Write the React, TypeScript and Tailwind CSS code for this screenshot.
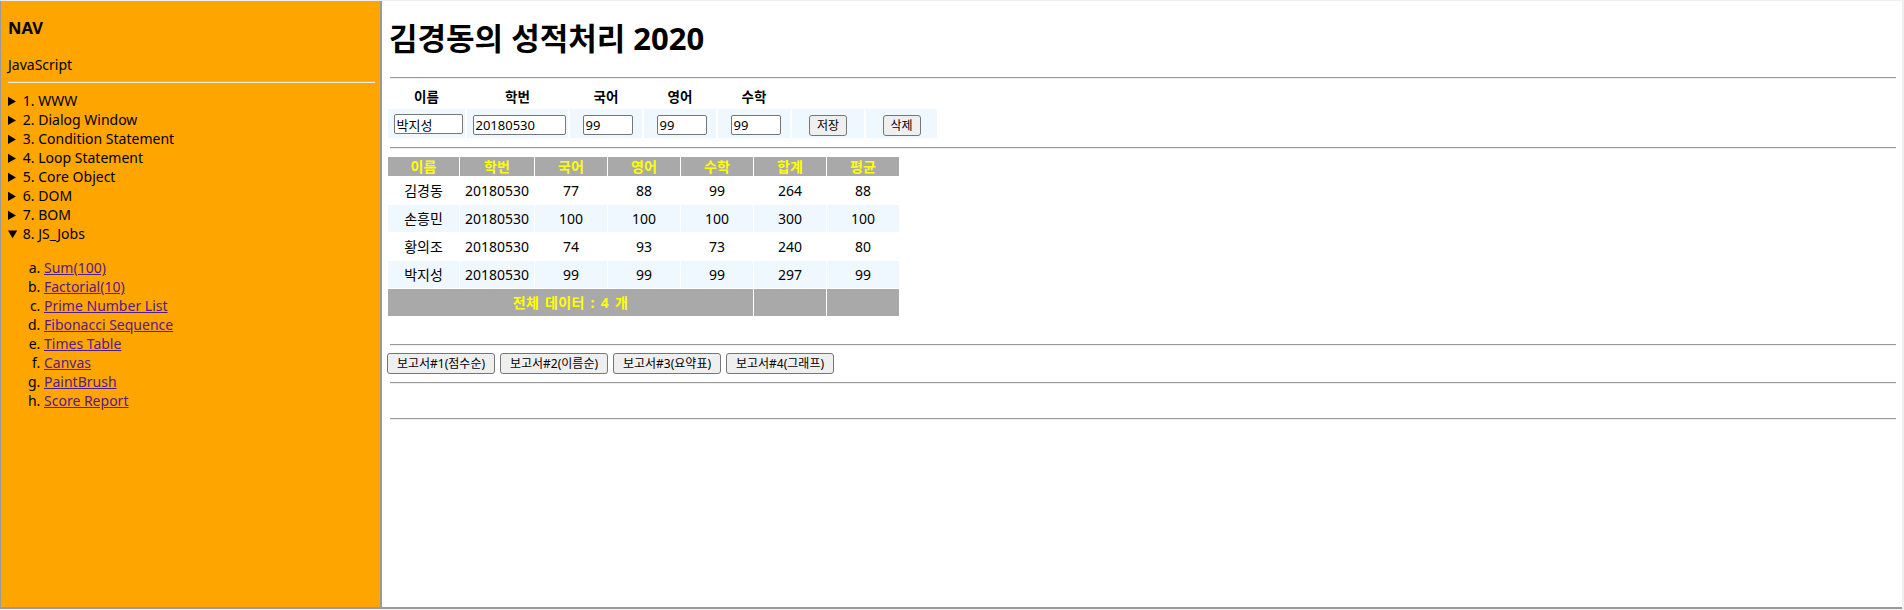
import React from "react";

const rows: (string | number)[][] = [
  ["김경동", "20180530", 77, 88, 99, 264, 88],
  ["손흥민", "20180530", 100, 100, 100, 300, 100],
  ["황의조", "20180530", 74, 93, 73, 240, 80],
  ["박지성", "20180530", 99, 99, 99, 297, 99],
];

const menu = [
  "1. WWW",
  "2. Dialog Window",
  "3. Condition Statement",
  "4. Loop Statement",
  "5. Core Object",
  "6. DOM",
  "7. BOM",
];

const jobs: [string, string][] = [
  ["Sum", "(100)"],
  ["Factorial", "(10)"],
  ["Prime Number List", ""],
  ["Fibonacci Sequence", ""],
  ["Times Table", ""],
  ["Canvas", ""],
  ["PaintBrush", ""],
  ["Score Report", ""],
];

function Hr({ className = "" }: { className?: string }) {
  return <div className={"h-[2px] border-t border-t-[#9a9a9a] border-b border-b-[#eeeeee] ml-[4px] " + className} />;
}

export default function App() {
  const heads = ["이름", "학번", "국어", "영어", "수학", "합계", "평균"];
  const formWidths = ["w-[77px]", "w-[101px]", "w-[72px]", "w-[72px]", "w-[72px]", "w-[72px]", "w-[71px]"];
  const dataWidths = ["w-[71px]", "w-[74px]", "w-[72px]", "w-[72px]", "w-[72px]", "w-[72px]", "w-[72px]"];
  const inputCls =
    "h-[20px] rounded-[2px] border border-[#767676] bg-white px-[2px] text-[13px] leading-[18px] outline-none";
  const btnCls =
    "h-[21px] rounded-[3px] border border-[#767676] bg-[#efefef] text-[12px] leading-[19px] whitespace-nowrap";
  return (
    <div className="h-[610px] w-[1904px] overflow-hidden bg-[#efefef] pt-px pr-[2px] font-['Noto_Sans','Noto_Sans_CJK_KR',sans-serif] text-black">
      <div className="flex h-[608px] border-b-2 border-b-[#9a9a9a]">
        {/* NAV */}
        <nav className="w-[382px] shrink-0 border-l border-l-[#9a9a9a] border-r-2 border-r-[#9a9a9a] bg-[#ffa500] pl-[7px] pr-[5px] pt-[17px]">
          <h3 className="text-[16.5px] leading-[20px] font-bold">NAV</h3>
          <div className="mt-[17px] text-[14px] leading-[19px]">JavaScript</div>
          <div className="mt-[7px] h-[2px] border-t border-t-[#b8b8b8] border-b border-b-[#eaeaea]" />
          <div className="mt-[8px] text-[14px] leading-[19px]">
            {menu.map((m) => (
              <details key={m}>
                <summary className="cursor-pointer">{m}</summary>
              </details>
            ))}
            <details open>
              <summary className="cursor-pointer">8. JS_Jobs</summary>
              <ol className="mt-[15px] list-[lower-alpha] pl-[36px]">
                {jobs.map(([a, b]) => (
                  <li key={a} className="leading-[19px]">
                    <a href="#" className="text-[#551a8b] underline">
                      {a}
                      {b}
                    </a>
                  </li>
                ))}
              </ol>
            </details>
          </div>
        </nav>

        {/* MAIN */}
        <main className="flex-1 bg-white pl-[4px] pr-[6px]">
          <div className="h-[76px] pt-[19px]">
            <h1 className="ml-[3px] text-[31px] leading-[36px] font-bold">김경동의 성적처리 2020</h1>
          </div>
          <Hr />

          <table className="mt-[6px] border-separate border-spacing-[2px]">
            <tbody>
              <tr>
                {heads.slice(0, 5).map((h, i) => (
                  <th key={h} className={"h-[20px] p-0 text-center text-[13.5px] leading-[20px] font-bold " + formWidths[i]}>
                    {h}
                  </th>
                ))}
                <th className={"p-0 " + formWidths[5]} />
                <th className={"p-0 " + formWidths[6]} />
              </tr>
              <tr className="bg-[#f0f8ff]">
                <td className="h-[29px] p-0 pl-[3px] text-center">
                  <input defaultValue="박지성" className={inputCls + " w-[69px]"} />
                </td>
                <td className="p-0 pl-[3px] text-center">
                  <input defaultValue="20180530" className={inputCls + " w-[93px]"} />
                </td>
                {["99", "99", "99"].map((v, i) => (
                  <td key={i} className="p-0 pl-[3px] text-center">
                    <input defaultValue={v} className={inputCls + " w-[50px]"} />
                  </td>
                ))}
                <td className="p-0 text-center">
                  <button className={btnCls + " w-[38px]"}>저장</button>
                </td>
                <td className="p-0 text-center">
                  <button className={btnCls + " w-[38px]"}>삭제</button>
                </td>
              </tr>
            </tbody>
          </table>

          <Hr className="mt-[7px]" />

          <table className="ml-[1px] mt-[7px] border-separate border-spacing-[1px] text-[14px]">
            <thead>
              <tr className="bg-[#a9a9a9]">
                {heads.map((h, i) => (
                  <th key={h} className={"h-[19px] p-0 text-center text-[14px] font-bold leading-[19px] text-[#ffff00] " + dataWidths[i]}>
                    {h}
                  </th>
                ))}
              </tr>
            </thead>
            <tbody>
              {rows.map((r, i) => (
                <tr key={i} className={i % 2 === 1 ? "bg-[#f0f8ff]" : "bg-white"}>
                  {r.map((c, j) => (
                    <td key={j} className="h-[27px] p-0 text-center leading-[19px]">
                      {c}
                    </td>
                  ))}
                </tr>
              ))}
              <tr className="bg-[#a9a9a9]">
                <td colSpan={5} className="h-[27px] p-0 text-center text-[14px] font-bold leading-[19px] tracking-[0.3px] [word-spacing:2px] text-[#ffff00]">
                  전체 데이터 : 4 개
                </td>
                <td className="p-0" />
                <td className="p-0" />
              </tr>
            </tbody>
          </table>

          <Hr className="mt-[27px]" />

          <div className="ml-[1px] mt-[6px] flex h-[22px] items-center gap-[5px]">
            {["보고서#1(점수순)", "보고서#2(이름순)", "보고서#3(요약표)", "보고서#4(그래프)"].map((b) => (
              <button key={b} className={btnCls + " w-[108px] px-[2px]"}>
                {b}
              </button>
            ))}
          </div>

          <Hr className="mt-[8px]" />
          <Hr className="mt-[34px]" />
        </main>
      </div>
    </div>
  );
}
